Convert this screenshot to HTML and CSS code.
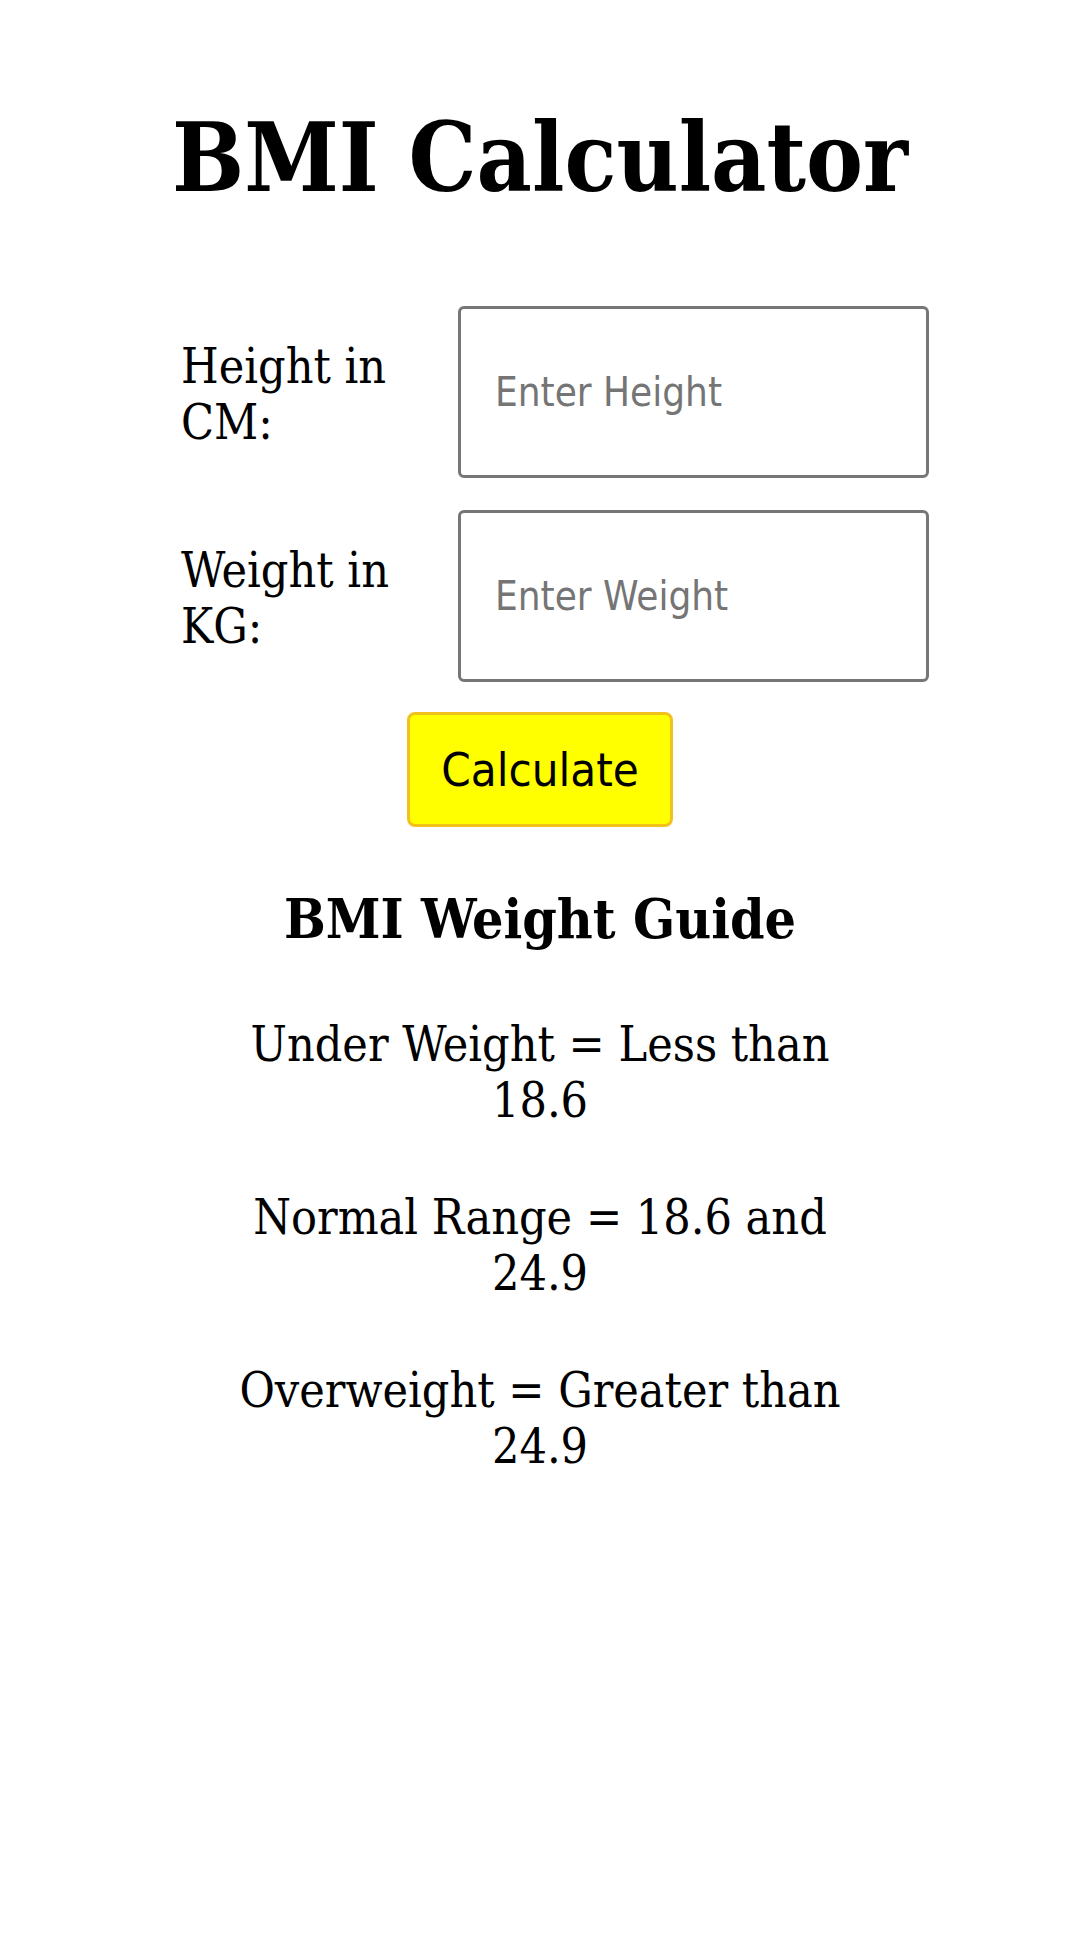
FILE: index.html
```html
<!DOCTYPE html>
<html>
<head>
<meta charset="utf-8">
<link rel="stylesheet" href="styles.css">
</head>
<body>
<main class="page">
  <h1 class="title">BMI Calculator</h1>
  <form class="form">
    <div class="row">
      <label class="label" for="h">Height in CM:</label>
      <input class="field" id="h" type="text" placeholder="Enter Height">
    </div>
    <div class="row">
      <label class="label" for="w">Weight in KG:</label>
      <input class="field" id="w" type="text" placeholder="Enter Weight">
    </div>
    <button class="btn" type="button">Calculate</button>
  </form>
  <section class="guide">
    <h2 class="guide-title">BMI Weight Guide</h2>
    <p class="guide-item">Under Weight = Less than 18.6</p>
    <p class="guide-item">Normal Range = 18.6 and 24.9</p>
    <p class="guide-item">Overweight = Greater than 24.9</p>
  </section>
</main>
</body>
</html>
```
FILE: styles.css
```css
html, body {
  margin: 0;
  padding: 0;
  background: #ffffff;
}
body {
  font-family: "DejaVu Serif", serif;
  font-stretch: condensed;
  color: #000;
}
.page {
  display: flex;
  flex-direction: column;
  align-items: center;
  padding-top: 92px;
}
.title {
  margin: 0;
  font-size: 95px;
  font-weight: bold;
  line-height: 132px;
}
.form {
  margin-top: 82px;
  margin-left: 30px;
  width: 748px;
  display: flex;
  flex-direction: column;
  gap: 32px;
}
.row {
  display: flex;
  align-items: flex-start;
}
.label {
  flex: 0 0 277px;
  padding-top: 32px;
  font-size: 48px;
  line-height: 56px;
}
.field {
  box-sizing: border-box;
  width: 471px;
  height: 172px;
  border: 3px solid #767676;
  border-radius: 6px;
  padding: 0 34px;
  font-family: "DejaVu Sans", sans-serif;
  font-stretch: condensed;
  font-size: 40px;
  outline: none;
}
.field::placeholder {
  color: #757575;
}
.btn {
  align-self: center;
  margin-top: -2px;
  margin-right: 30px;
  box-sizing: border-box;
  width: 266px;
  height: 115px;
  background: #ffff00;
  border: 3px solid #f1c21b;
  border-radius: 8px;
  font-family: "DejaVu Sans", sans-serif;
  font-stretch: condensed;
  font-size: 47px;
  color: #000;
}
.guide {
  margin-top: 52px;
  width: 660px;
  text-align: center;
}
.guide-title {
  margin: 0 0 57px;
  font-size: 55px;
  line-height: 80px;
  font-weight: bold;
}
.guide-item {
  margin: 0 0 61px;
  font-size: 48px;
  line-height: 56px;
}
```
